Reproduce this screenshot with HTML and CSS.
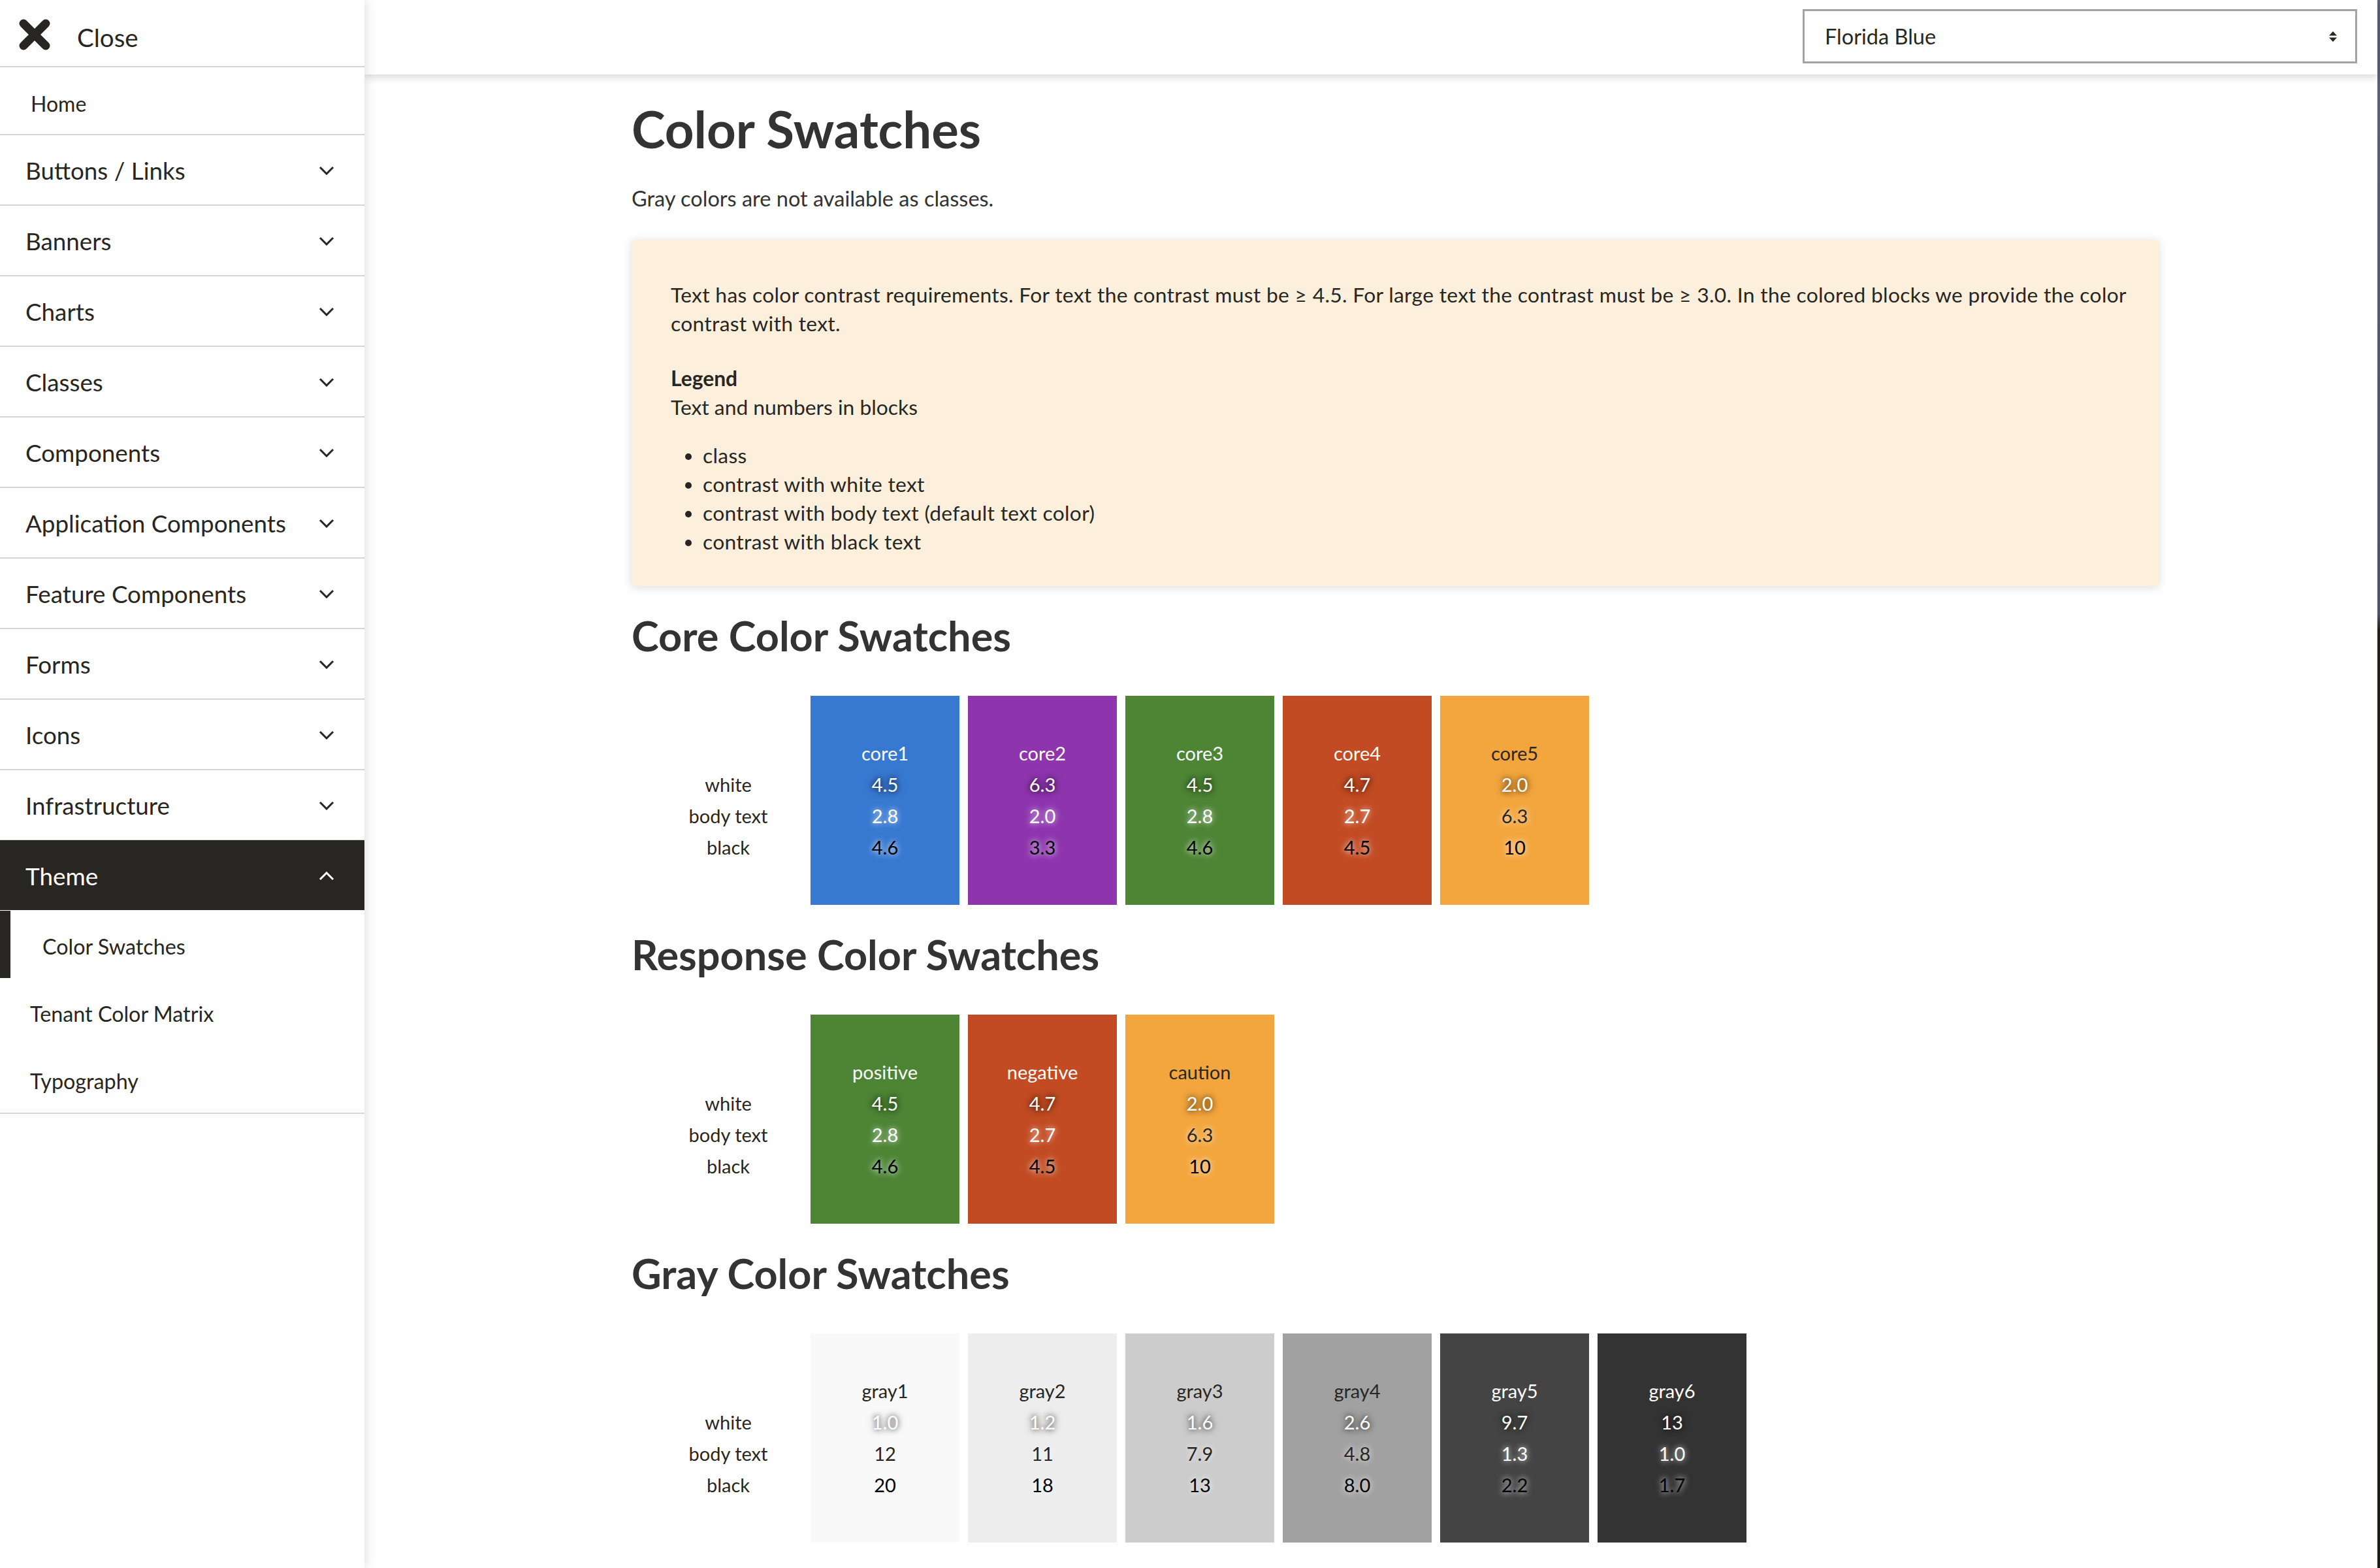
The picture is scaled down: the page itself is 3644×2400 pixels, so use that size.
FILE: index.html
```html
<!DOCTYPE html>
<html lang="en">
<head>
<meta charset="utf-8">
<title>Color Swatches</title>
<link rel="stylesheet" href="styles.css">
</head>
<body>
<div class="window">
  <aside class="sidebar">
    <div class="close-row">
      <svg class="close-icon" viewBox="0 0 48 48" width="48" height="48"><path d="M7 7 L41 41 M41 7 L7 41" stroke="#282622" stroke-width="13" stroke-linecap="round" fill="none"/></svg>
      <span class="close-label">Close</span>
    </div>
    <div class="nav-home">Home</div>
    <div class="nav-item"><span>Buttons / Links</span><svg class="chev" viewBox="0 0 24 14" width="24" height="14"><polyline points="2,2 12,12 22,2" fill="none" stroke="currentColor" stroke-width="3"/></svg></div>
    <div class="nav-item"><span>Banners</span><svg class="chev" viewBox="0 0 24 14" width="24" height="14"><polyline points="2,2 12,12 22,2" fill="none" stroke="currentColor" stroke-width="3"/></svg></div>
    <div class="nav-item"><span>Charts</span><svg class="chev" viewBox="0 0 24 14" width="24" height="14"><polyline points="2,2 12,12 22,2" fill="none" stroke="currentColor" stroke-width="3"/></svg></div>
    <div class="nav-item"><span>Classes</span><svg class="chev" viewBox="0 0 24 14" width="24" height="14"><polyline points="2,2 12,12 22,2" fill="none" stroke="currentColor" stroke-width="3"/></svg></div>
    <div class="nav-item"><span>Components</span><svg class="chev" viewBox="0 0 24 14" width="24" height="14"><polyline points="2,2 12,12 22,2" fill="none" stroke="currentColor" stroke-width="3"/></svg></div>
    <div class="nav-item"><span>Application Components</span><svg class="chev" viewBox="0 0 24 14" width="24" height="14"><polyline points="2,2 12,12 22,2" fill="none" stroke="currentColor" stroke-width="3"/></svg></div>
    <div class="nav-item"><span>Feature Components</span><svg class="chev" viewBox="0 0 24 14" width="24" height="14"><polyline points="2,2 12,12 22,2" fill="none" stroke="currentColor" stroke-width="3"/></svg></div>
    <div class="nav-item"><span>Forms</span><svg class="chev" viewBox="0 0 24 14" width="24" height="14"><polyline points="2,2 12,12 22,2" fill="none" stroke="currentColor" stroke-width="3"/></svg></div>
    <div class="nav-item"><span>Icons</span><svg class="chev" viewBox="0 0 24 14" width="24" height="14"><polyline points="2,2 12,12 22,2" fill="none" stroke="currentColor" stroke-width="3"/></svg></div>
    <div class="nav-item"><span>Infrastructure</span><svg class="chev" viewBox="0 0 24 14" width="24" height="14"><polyline points="2,2 12,12 22,2" fill="none" stroke="currentColor" stroke-width="3"/></svg></div>
    <div class="nav-item nav-open"><span>Theme</span><svg class="chev" viewBox="0 0 24 14" width="24" height="14"><polyline points="2,12 12,2 22,12" fill="none" stroke="currentColor" stroke-width="3"/></svg></div>
    <div class="sub-list">
      <div class="sub-item sub-active">Color Swatches</div>
      <div class="sub-item">Tenant Color Matrix</div>
      <div class="sub-item">Typography</div>
    </div>
  </aside>

  <div class="main">
    <header class="topbar">
      <div class="select">
        <span>Florida Blue</span>
        <svg class="select-arrows" viewBox="0 0 16 18" width="16" height="18"><polygon points="8,1 14,7.5 2,7.5" fill="#282622"/><polygon points="2,10.5 14,10.5 8,17" fill="#282622"/></svg>
      </div>
    </header>

    <main class="content">
      <h1 class="page-title">Color Swatches</h1>
      <p class="intro">Gray colors are not available as classes.</p>

      <div class="info-box">
        <p class="info-text">Text has color contrast requirements. For text the contrast must be ≥ 4.5. For large text the contrast must be ≥ 3.0. In the colored blocks we provide the color contrast with text.</p>
        <div class="legend-title">Legend</div>
        <div class="legend-sub">Text and numbers in blocks</div>
        <ul class="legend-list">
          <li>class</li>
          <li>contrast with white text</li>
          <li>contrast with body text (default text color)</li>
          <li>contrast with black text</li>
        </ul>
      </div>

      <h2 class="section-title">Core Color Swatches</h2>
      <div class="swatch-row">
        <div class="labels"><div>white</div><div>body text</div><div>black</div></div>
        <div class="swatch c-core1 fg-light"><div>core1</div><div class="n-white">4.5</div><div class="n-body">2.8</div><div class="n-black">4.6</div></div>
        <div class="swatch c-core2 fg-light"><div>core2</div><div class="n-white">6.3</div><div class="n-body">2.0</div><div class="n-black">3.3</div></div>
        <div class="swatch c-core3 fg-light"><div>core3</div><div class="n-white">4.5</div><div class="n-body">2.8</div><div class="n-black">4.6</div></div>
        <div class="swatch c-core4 fg-light"><div>core4</div><div class="n-white">4.7</div><div class="n-body">2.7</div><div class="n-black">4.5</div></div>
        <div class="swatch c-core5 fg-dark"><div>core5</div><div class="n-white">2.0</div><div class="n-body">6.3</div><div class="n-black">10</div></div>
      </div>

      <h2 class="section-title">Response Color Swatches</h2>
      <div class="swatch-row">
        <div class="labels"><div>white</div><div>body text</div><div>black</div></div>
        <div class="swatch c-core3 fg-light"><div>positive</div><div class="n-white">4.5</div><div class="n-body">2.8</div><div class="n-black">4.6</div></div>
        <div class="swatch c-core4 fg-light"><div>negative</div><div class="n-white">4.7</div><div class="n-body">2.7</div><div class="n-black">4.5</div></div>
        <div class="swatch c-core5 fg-dark"><div>caution</div><div class="n-white">2.0</div><div class="n-body">6.3</div><div class="n-black">10</div></div>
      </div>

      <h2 class="section-title">Gray Color Swatches</h2>
      <div class="swatch-row">
        <div class="labels"><div>white</div><div>body text</div><div>black</div></div>
        <div class="swatch c-gray1 fg-dark"><div>gray1</div><div class="n-white">1.0</div><div class="n-body">12</div><div class="n-black">20</div></div>
        <div class="swatch c-gray2 fg-dark"><div>gray2</div><div class="n-white">1.2</div><div class="n-body">11</div><div class="n-black">18</div></div>
        <div class="swatch c-gray3 fg-dark"><div>gray3</div><div class="n-white">1.6</div><div class="n-body">7.9</div><div class="n-black">13</div></div>
        <div class="swatch c-gray4 fg-dark"><div>gray4</div><div class="n-white">2.6</div><div class="n-body">4.8</div><div class="n-black">8.0</div></div>
        <div class="swatch c-gray5 fg-light"><div>gray5</div><div class="n-white">9.7</div><div class="n-body">1.3</div><div class="n-black">2.2</div></div>
        <div class="swatch c-gray6 fg-light"><div>gray6</div><div class="n-white">13</div><div class="n-body">1.0</div><div class="n-black">1.7</div></div>
      </div>
    </main>
  </div>
</div>
<div class="edge"></div>
</body>
</html>
```

FILE: styles.css
```css
* { box-sizing: border-box; }

html, body {
  margin: 0;
  padding: 0;
}

body {
  width: 3644px;
  height: 2400px;
  overflow: hidden;
  display: flex;
  font-family: "Lato", "Open Sans", sans-serif;
  color: #282622;
  background: #ffffff;
}

.window {
  width: 3640px;
  height: 2400px;
  display: flex;
  background: #ffffff;
}

.edge {
  width: 4px;
  height: 2400px;
  background: linear-gradient(to bottom, #5a6275 0px, #4d5264 940px, #241d1b 965px, #1d1816 2400px);
}

/* ---------- Sidebar ---------- */
.sidebar {
  width: 558px;
  flex: none;
  height: 2400px;
  background: #ffffff;
  box-shadow: 2px 0 16px rgba(0, 0, 0, 0.13);
  position: relative;
  z-index: 2;
}

.close-row {
  height: 103px;
  border-bottom: 2px solid #d6d6d6;
  display: flex;
  align-items: center;
  padding-left: 29px;
  padding-top: 4px;
}

.close-icon { flex: none; }

.close-label {
  margin-left: 41px;
  margin-top: 8px;
  font-size: 38.5px;
}

.nav-home {
  height: 104px;
  border-bottom: 2px solid #d6d6d6;
  display: flex;
  align-items: center;
  padding-left: 47px;
  padding-top: 8px;
  font-size: 32px;
}

.nav-item {
  height: 108px;
  border-bottom: 2px solid #d6d6d6;
  display: flex;
  align-items: center;
  justify-content: space-between;
  padding: 2px 46px 0 39px;
  font-size: 36.8px;
  color: #282622;
}

.chev { flex: none; }

.nav-open {
  background: #282622;
  color: #ffffff;
  border-bottom: none;
  height: 107px;
  margin-top: -1px;
  padding-top: 3px;
}

.sub-list {
  border-bottom: 2px solid #d6d6d6;
  padding-top: 1px;
}

.sub-item {
  height: 103px;
  display: flex;
  align-items: center;
  padding-left: 46px;
  padding-top: 6px;
  font-size: 32.3px;
}

.sub-active {
  border-left: 16px solid #282622;
  padding-left: 49px;
}

/* ---------- Main ---------- */
.main {
  flex: 1;
  height: 2400px;
  display: flex;
  flex-direction: column;
  min-width: 0;
}

.topbar {
  height: 114px;
  flex: none;
  background: #ffffff;
  box-shadow: 0 4px 12px rgba(0, 0, 0, 0.16);
  display: flex;
  justify-content: flex-end;
  align-items: flex-start;
  padding: 14px 31px 0 0;
  position: relative;
  z-index: 1;
}

.select {
  width: 849px;
  height: 83px;
  border: 3px solid #a3a3a3;
  display: flex;
  align-items: center;
  justify-content: space-between;
  padding: 0 26px 0 31px;
  font-size: 32.5px;
  color: #282622;
}

.select-arrows { flex: none; }

.content {
  flex: 1;
  padding-left: 409px;
  width: 2747px;
  color: #333333;
}

.page-title {
  margin: 38px 0 0 0;
  font-size: 78px;
  line-height: 91px;
  font-weight: 700;
  color: #333333;
}

.intro {
  margin: 39px 0 0 0;
  font-size: 32.5px;
  line-height: 44px;
}

.info-box {
  margin-top: 41px;
  width: 2338px;
  background: #fcf0dd;
  box-shadow: 0 2px 14px rgba(0, 0, 0, 0.14);
  padding: 62px 30px 46px 60px;
  font-size: 31.8px;
  line-height: 44px;
  color: #282622;
}

.info-text { margin: 0; letter-spacing: 0.3px; }

.legend-title {
  margin-top: 40px;
  font-weight: 700;
}

.legend-list {
  margin: 30px 0 0 0;
  padding-left: 49px;
  letter-spacing: 0.3px;
}

.section-title {
  margin: 39px 0 56px 0;
  font-size: 63px;
  line-height: 73px;
  font-weight: 700;
  color: #333333;
}

/* ---------- Swatches ---------- */
.swatch-row {
  display: flex;
  gap: 13px;
  font-size: 29px;
  line-height: 48px;
}

.labels {
  width: 252px;
  margin-left: 22px;
  margin-right: -13px;
  padding-top: 112px;
  text-align: center;
  color: #282622;
}

.swatch {
  width: 228px;
  height: 320px;
  padding-top: 64px;
  text-align: center;
}

.fg-light { color: #ffffff; }
.fg-dark { color: #282622; }

.n-white {
  color: #ffffff;
  text-shadow: 0 0 8px rgba(0, 0, 0, 0.75), 0 0 14px rgba(0, 0, 0, 0.35);
}

.n-body {
  text-shadow: 0 0 8px rgba(255, 255, 255, 0.7), 0 0 14px rgba(255, 255, 255, 0.3);
}

.n-black {
  color: #000000;
  text-shadow: 0 0 8px rgba(255, 255, 255, 0.8), 0 0 14px rgba(255, 255, 255, 0.35);
}

.c-core1 { background: #3778d1; }
.c-core2 { background: #8e35ae; }
.c-core3 { background: #4d8535; }
.c-core4 { background: #c24b23; }
.c-core5 { background: #f3a63d; }
.c-gray1 { background: #f9f9f9; }
.c-gray2 { background: #ededed; }
.c-gray3 { background: #cccccc; }
.c-gray4 { background: #a1a1a1; }
.c-gray5 { background: #444444; }
.c-gray6 { background: #333333; }
```
